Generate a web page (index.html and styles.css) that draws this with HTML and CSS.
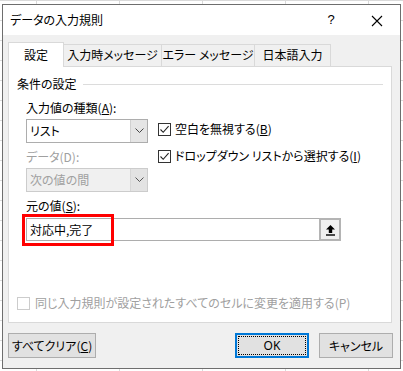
FILE: index.html
```html
<!DOCTYPE html>
<html>
<head>
<meta charset="UTF-8">
<title>データの入力規則</title>
<link rel="stylesheet" href="styles.css">
</head>
<body>

<div class="dialog">
	<div class="titlebar">
		<span class="title">データの入力規則</span>
		<span class="help">?</span>
		<span class="close">
			<svg width="12" height="12" viewBox="0 0 12 12"><path d="M1 1L11 11M11 1L1 11" stroke="#000" stroke-width="1.1" fill="none"/></svg>
		</span>
	</div>

	<div class="body">
		<div class="tabs">
			<div class="tab active" style="width:56px">設定</div>
			<div class="tab" style="width:99px">入力時メッセージ</div>
			<div class="tab" style="width:94px">エラー メッセージ</div>
			<div class="tab" style="width:77px">日本語入力</div>
		</div>

		<div class="panel">
			<div class="group-title"><span>条件の設定</span><i class="rule"></i></div>

			<div class="fields">
				<div class="top">
					<div class="left">
						<div class="lbl">入力値の種類(<u>A</u>):</div>
						<div class="combo">
							<span class="combo-text">リスト</span>
							<span class="combo-btn">
								<svg width="9" height="6" viewBox="0 0 9 6"><path d="M0.5 0.5L4.5 4.5L8.5 0.5" stroke="#444" fill="none"/></svg>
							</span>
						</div>
						<div class="lbl disabled gap">データ(D):</div>
						<div class="combo off">
							<span class="combo-text">次の値の間</span>
							<span class="combo-btn">
								<svg width="9" height="6" viewBox="0 0 9 6"><path d="M0.5 0.5L4.5 4.5L8.5 0.5" stroke="#555" fill="none"/></svg>
							</span>
						</div>
					</div>
					<div class="checks">
						<div class="check">
							<span class="box"><svg width="11" height="11" viewBox="0 0 11 11"><path d="M1.5 5.5L4.2 8.3L9.6 2.2" stroke="#222" stroke-width="1.1" fill="none"/></svg></span>
							<span>空白を無視する(<u>B</u>)</span>
						</div>
						<div class="check">
							<span class="box"><svg width="11" height="11" viewBox="0 0 11 11"><path d="M1.5 5.5L4.2 8.3L9.6 2.2" stroke="#222" stroke-width="1.1" fill="none"/></svg></span>
							<span>ドロップダウン リストから選択する(<u>I</u>)</span>
						</div>
					</div>
				</div>

				<div class="lbl gap">元の値(<u>S</u>):</div>
				<div class="source">
					<span class="source-text">対応中,完了</span>
					<span class="pick">
						<svg width="11" height="12" viewBox="0 0 11 12"><path d="M5.5 1L10 5.6H7.2V9H3.8V5.6H1Z" fill="#000"/><rect x="1" y="10.3" width="9" height="1.4" fill="#000"/></svg>
					</span>
					<span class="mark"></span>
				</div>
			</div>

			<div class="check apply disabled">
				<span class="box"></span>
				<span>同じ入力規則が設定されたすべてのセルに変更を適用する(P)</span>
			</div>
		</div>

		<div class="buttons">
			<div class="btn" style="width:88px">すべてクリア(<u>C</u>)</div>
			<div class="spacer"></div>
			<div class="btn default" style="width:74px"><span class="focus">OK</span></div>
			<div class="btn" style="width:74px">キャンセル</div>
		</div>
	</div>
</div>

</body>
</html>
```

FILE: styles.css
```css
*{
	box-sizing: border-box;
}
body{
	margin: 0;
	width: 403px;
	height: 371px;
	overflow: hidden;
	font-family: "Noto Sans CJK JP", "Noto Sans", sans-serif;
	font-size: 12px;
	line-height: 16px;
	color: #000;
	font-feature-settings: "palt";
	background-color: #fff;
	background-image:
		linear-gradient(to right, #dadada 1px, transparent 1px),
		linear-gradient(to bottom, #dadada 1px, transparent 1px);
	background-size: 83px 20px;
	background-position: 36px 0;
}
.dialog{
	margin: 4px 0 0 2px;
	width: 399px;
	height: 365px;
	border: 1px solid #6e6e6e;
	background-color: #f0f0f0;
	display: flex;
	flex-direction: column;
}
.titlebar{
	height: 30px;
	background-color: #fff;
	display: flex;
	align-items: center;
	padding-left: 7px;
}
.title{ flex: 1; }
.help{
	font-family: "Liberation Sans", sans-serif;
	font-size: 13px;
	width: 46px;
	text-align: center;
}
.close{
	width: 46px;
	display: flex;
	justify-content: center;
	padding-top: 1px;
}
.body{
	flex: 1;
	padding: 7px 7px 9px 5px;
	display: flex;
	flex-direction: column;
}

/* tabs */
.tabs{
	display: flex;
	align-items: flex-end;
	height: 24px;
	position: relative;
	z-index: 1;
}
.tab{
	height: 22px;
	border: 1px solid #d9d9d9;
	border-bottom: none;
	margin-right: -1px;
	text-align: center;
	line-height: 20px;
	background-color: #f0f0f0;
	white-space: nowrap;
}
.tab.active{
	height: 25px;
	margin-bottom: -1px;
	background-color: #fff;
	line-height: 24px;
}
.panel{
	width: 384px;
	height: 257px;
	border: 1px solid #d9d9d9;
	background-color: #fff;
	padding: 9px 8px 0 8px;
	display: flex;
	flex-direction: column;
}
.group-title{
	display: flex;
	align-items: center;
}
.rule{
	flex: 1;
	height: 1px;
	margin-left: 6px;
	background-color: #dcdcdc;
}
.fields{
	padding-left: 9px;
	margin-top: 8px;
}
.top{ display: flex; }
.left{ width: 122px; }
.lbl{ height: 16px; white-space: nowrap; }
.lbl.gap{ margin-top: 6px; }
.disabled{ color: #a0a0a0; }
.combo{
	margin-top: 3px;
	height: 24px;
	border: 1px solid #adadad;
	display: flex;
	background-color: #fff;
}
.combo-text{
	flex: 1;
	padding-left: 3px;
	line-height: 22px;
}
.combo-btn{
	width: 17px;
	background-color: #e5e5e5;
	border-left: 1px solid #d0d0d0;
	display: flex;
	align-items: center;
	justify-content: center;
}
.combo.off{
	background-color: #f0f0f0;
	border-color: #cccccc;
	color: #a0a0a0;
}
.combo.off .combo-btn{
	background-color: #e3e3e3;
	border-left-color: #d6d6d6;
}
.checks{
	margin-left: 10px;
	padding-top: 21px;
}
.check{
	display: flex;
	align-items: center;
	height: 16px;
	margin-bottom: 11px;
	white-space: nowrap;
}
.box{
	width: 13px;
	height: 13px;
	border: 1px solid #333;
	background-color: #fff;
	margin-right: 4px;
	display: flex;
	align-items: center;
	justify-content: center;
}
.source{
	margin-top: 4px;
	width: 315px;
	height: 23px;
	border: 1px solid #adadad;
	display: flex;
	position: relative;
}
.source-text{
	flex: 1;
	padding-left: 3px;
	line-height: 21px;
}
.pick{
	width: 22px;
	margin: -1px -1px -1px 0;
	border: 2px solid #b4b4b4;
	background-color: #f0f0f0;
	display: flex;
	align-items: center;
	justify-content: center;
}
.mark{
	position: absolute;
	left: -5px;
	top: -5px;
	width: 92px;
	height: 32px;
	border: 3px solid #f00;
}
.apply{
	margin-top: auto;
	margin-bottom: 11px;
}
.apply .box{
	border-color: #cccccc;
	margin-right: 5px;
}

/* buttons */
.buttons{
	display: flex;
	margin-top: 10px;
	margin-left: 0;
}
.spacer{ flex: 1; }
.btn{
	height: 25px;
	border: 1px solid #adadad;
	background-color: #e1e1e1;
	display: flex;
	align-items: center;
	justify-content: center;
	white-space: nowrap;
	margin-left: 10px;
}
.btn:first-child{ margin-left: 0; }
.btn.default{
	border: 2px solid #0078d7;
	padding: 1px;
}
.focus{
	width: 100%;
	height: 100%;
	border: 1px dotted #000;
	display: flex;
	align-items: center;
	justify-content: center;
	font-family: "Noto Sans", sans-serif;
}
```
